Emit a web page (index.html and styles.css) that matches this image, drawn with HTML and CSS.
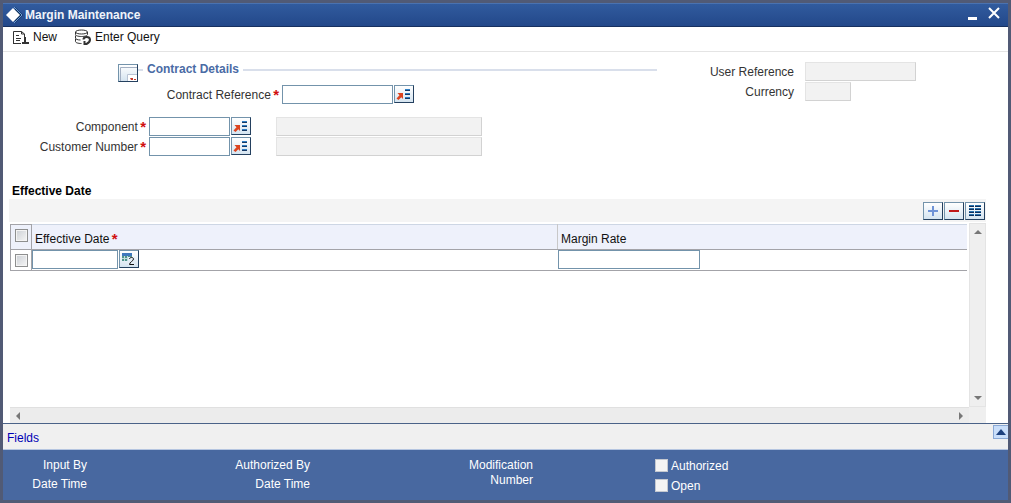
FILE: index.html
```html
<!DOCTYPE html>
<html lang="en">
<head>
    <meta charset="UTF-8">
    <meta name="viewport" content="width=device-width, initial-scale=1.0">
    <title>Margin Maintenance</title>
    <link rel="stylesheet" href="styles.css">
</head>
<body>
    <svg class="sprite" aria-hidden="true">
        <symbol id="lov" viewBox="0 0 18 16">
            <path d="M2.500 7H8v6L6.300 11.300 3.500 14 1.500 12.500 4.500 9.300z" fill="#dc4420"/>
            <path d="M10 4h5M10 8h5M10 12h5" stroke="#2f7fc4" stroke-width="2"/>
            <path d="M10 4.500h5M10 8.500h5M10 12.500h5" stroke="#163a66"/>
        </symbol>
    </svg>

    <div class="window">
        <header class="titlebar">
            <svg class="logo" width="18" height="18" viewBox="0 0 18 18">
                <path d="M10 1l8 8-8 8z" fill="#0c2f5c"/>
                <path d="M8 2l7 7-7 7-7-7z" fill="#fff"/>
                <path d="M9 1l8 8-8 8" fill="none" stroke="#6d9bd0"/>
            </svg>
            <h1>Margin Maintenance</h1>
            <button class="win-btn" type="button" aria-label="Minimize">
                <svg width="12" height="18" viewBox="0 0 12 18"><path d="M2 12.500h9" stroke="#fff" stroke-width="3"/></svg>
            </button>
            <button class="win-btn" type="button" aria-label="Close">
                <svg width="12" height="18" viewBox="0 0 12 18"><path d="M1 2l10 10M11 2L1 12" stroke="#fff" stroke-width="2"/></svg>
            </button>
        </header>

        <nav class="actions">
            <button class="action" type="button">
                <svg width="18" height="16" viewBox="0 0 18 16" fill="none" stroke="#333">
                    <path d="M1.500 15V2.500h8l3 2.500v5M9.500 2.500V5h3M1 14.500h8M4 6.500h3M4 9.500h5M4 11.500h4"/>
                    <path d="M13 8v7M10 14h7" stroke-width="2"/>
                </svg>
                New
            </button>
            <button class="action" type="button">
                <svg width="18" height="16" viewBox="0 0 18 16" fill="none" stroke="#333">
                    <ellipse cx="7.500" cy="3" rx="6" ry="2"/>
                    <path d="M1.500 3v2.500c0 1.200 2.500 2 6 2s6-.8 6-2V3M1.500 6.500v2.500c0 1.200 2 2 5 2M1.500 10v2.500c0 1.200 2.500 2 6 2"/>
                    <path d="M9.500 10.500c0-3 6-3.500 6.500 0 .2 2-1.500 3.500-3.500 4.500M10.500 12v3h3.500" stroke-width="2"/>
                </svg>
                Enter Query
            </button>
        </nav>

        <main class="content">
            <section class="contract">
                <div class="details">
                    <div class="legend">
                        <button class="icon-btn" type="button" aria-label="Toggle details">
                            <svg width="18" height="16" viewBox="0 0 18 16">
                                <path d="M1.500 16V2.500H18" fill="none" stroke="#a3afc2"/>
                                <path d="M9 10h9v6H9z" fill="#fff"/>
                                <path d="M8.500 16V9.500H18" fill="none" stroke="#b8c3d4"/>
                                <path d="M11 13h3v2h-2zM15 14h2v1h-2z" fill="#c43a2c"/>
                            </svg>
                        </button>
                        <h2>Contract Details</h2>
                    </div>
                    <div class="field wide">
                        <label for="contractRef">Contract Reference <span class="req">*</span></label>
                        <input id="contractRef" class="box medium" type="text">
                        <button class="icon-btn" type="button" aria-label="Find contract"><svg width="18" height="16"><use href="#lov"/></svg></button>
                    </div>
                    <div class="group">
                        <div class="field">
                            <label for="component">Component <span class="req">*</span></label>
                            <input id="component" class="box small" type="text">
                            <button class="icon-btn" type="button" aria-label="Find component"><svg width="18" height="16"><use href="#lov"/></svg></button>
                            <input class="box readonly desc" type="text" aria-label="Component description" readonly>
                        </div>
                        <div class="field">
                            <label for="customer">Customer Number <span class="req">*</span></label>
                            <input id="customer" class="box small" type="text">
                            <button class="icon-btn" type="button" aria-label="Find customer"><svg width="18" height="16"><use href="#lov"/></svg></button>
                            <input class="box readonly desc" type="text" aria-label="Customer name" readonly>
                        </div>
                    </div>
                </div>
                <div class="summary">
                    <div class="field">
                        <label for="userRef">User Reference</label>
                        <input id="userRef" class="box readonly medium" type="text" readonly>
                    </div>
                    <div class="field">
                        <label for="currency">Currency</label>
                        <input id="currency" class="box readonly tiny" type="text" readonly>
                    </div>
                </div>
            </section>

            <section class="dates">
                <h3>Effective Date</h3>
                <div class="table-tools">
                    <button class="icon-btn" type="button" aria-label="Add row">
                        <svg width="18" height="16" viewBox="0 0 18 16"><path d="M9 3v10M4 8h10" stroke="#6f93d6" stroke-width="2"/></svg>
                    </button>
                    <button class="icon-btn" type="button" aria-label="Delete row">
                        <svg width="18" height="16" viewBox="0 0 18 16"><path d="M4 8h10" stroke="#c01818" stroke-width="2"/></svg>
                    </button>
                    <button class="icon-btn" type="button" aria-label="Single view">
                        <svg width="18" height="16" viewBox="0 0 18 16">
                            <path d="M3 3h5M3 6h5M3 9h5M3 12h5M9 3h6M9 6h6M9 9h6M9 12h6" stroke="#2a72ad" stroke-width="2"/>
                            <path d="M3 3.500h5M3 6.500h5M3 9.500h5M3 12.500h5M9 3.500h6M9 6.500h6M9 9.500h6M9 12.500h6" stroke="#0c2f5c"/>
                        </svg>
                    </button>
                </div>
                <div class="scroller">
                    <div class="table-area">
                        <table>
                            <thead>
                                <tr>
                                    <th class="tick"><input type="checkbox" aria-label="Select all rows"></th>
                                    <th class="date">Effective Date <span class="req">*</span></th>
                                    <th>Margin Rate</th>
                                </tr>
                            </thead>
                            <tbody>
                                <tr>
                                    <td class="tick"><input type="checkbox" aria-label="Select row"></td>
                                    <td>
                                        <div class="cell">
                                            <input class="box day" type="text" aria-label="Effective Date">
                                            <button class="icon-btn" type="button" aria-label="Pick date">
                                                <svg width="18" height="16" viewBox="0 0 18 16">
                                                    <path d="M2 2h10v3H2z" fill="#3f78bd"/>
                                                    <path d="M2 5h10v5H2z" fill="#4f938c"/>
                                                    <path d="M2 7.500h10M4.500 5v5M7.500 5v5" stroke="#c2dcdc"/>
                                                    <path d="M8 6h7v8H8z" fill="#e3edf6"/>
                                                    <path d="M9.500 8c0-2 4-2 4 0 0 2-4 3-4 5.500H14" fill="none" stroke="#111"/>
                                                </svg>
                                            </button>
                                        </div>
                                    </td>
                                    <td class="rate"><div class="cell"><input class="box amount" type="text" aria-label="Margin Rate"></div></td>
                                </tr>
                            </tbody>
                        </table>
                    </div>
                    <div class="vbar">
                        <svg width="8" height="4" viewBox="0 0 8 4"><path d="M4 0l4 4H0z" fill="#777"/></svg>
                        <svg width="8" height="4" viewBox="0 0 8 4"><path d="M0 0h8L4 4z" fill="#777"/></svg>
                    </div>
                    <div class="hbar">
                        <svg width="4" height="8" viewBox="0 0 4 8"><path d="M4 0v8L0 4z" fill="#777"/></svg>
                        <svg width="4" height="8" viewBox="0 0 4 8"><path d="M0 0l4 4-4 4z" fill="#777"/></svg>
                    </div>
                    <div class="corner"></div>
                </div>
            </section>
        </main>

        <div class="links">
            <a href="#fields">Fields</a>
            <button class="expand" type="button" aria-label="Expand">
                <svg width="10" height="6" viewBox="0 0 10 6"><path d="M5 0l5 6H0z" fill="#1d417e"/></svg>
            </button>
        </div>

        <footer class="audit">
            <div class="audit-col">
                <span>Input By</span>
                <span>Date Time</span>
            </div>
            <div class="audit-col">
                <span>Authorized By</span>
                <span>Date Time</span>
            </div>
            <div class="audit-col">
                <span>Modification Number</span>
            </div>
            <div class="flags">
                <label><input type="checkbox">Authorized</label>
                <label><input type="checkbox">Open</label>
            </div>
        </footer>
    </div>
</body>
</html>
```
FILE: styles.css
```css
* {
    box-sizing: border-box;
}
body {
    margin: 0;
    font-family: "Liberation Sans", Arial, sans-serif;
    font-size: 12px;
    line-height: 15px;
    color: #333;
    background: #fff;
}
h1, h2, h3 {
    margin: 0;
    font-size: 12px;
}
button, input {
    margin: 0;
    padding: 0;
    font: inherit;
}
button {
    cursor: pointer;
}
svg {
    display: block;
    flex: none;
}
.sprite {
    display: none;
}
.window {
    display: flex;
    flex-direction: column;
    min-height: 100vh;
    border: 3px solid #515a75;
}

/* title bar */
.titlebar {
    display: flex;
    align-items: center;
    gap: 2px;
    height: 24px;
    padding: 0 8px 0 2px;
    background: linear-gradient(#315b9e, #23488a);
    border-top: 1px solid #4a72b0;
    border-bottom: 1px solid #17305f;
    color: #fff;
}
.titlebar h1 {
    flex: 1;
    padding-top: 1px;
    color: #f0f4fa;
}
.win-btn {
    margin-left: 8px;
    background: none;
    border: none;
}

.actions {
    display: flex;
    gap: 17px;
    height: 25px;
    padding: 0 9px 4px;
    border-bottom: 1px solid #e4e4e4;
}
.action {
    display: flex;
    align-items: center;
    gap: 3px;
    background: none;
    border: none;
    color: #111;
}

.content {
    flex: 1;
    display: flex;
    flex-direction: column;
}

/* contract fields */
.contract {
    display: flex;
    padding-top: 10px;
}
.details {
    flex: 1;
}
.summary {
    width: 351px;
}
.legend {
    display: flex;
    align-items: flex-start;
    height: 23px;
    padding-left: 115px;
}
.legend .icon-btn {
    margin-top: 2px;
}
.legend h2 {
    flex: 1;
    display: flex;
    align-items: center;
    gap: 4px;
    color: #4a6ba5;
}
.legend h2::before,
.legend h2::after {
    content: "";
    height: 2px;
    background: #d9dfeb;
}
.legend h2::before {
    width: 5px;
}
.legend h2::after {
    flex: 1;
}
.field {
    display: flex;
    gap: 1px;
    height: 20px;
}
.field label {
    width: 145px;
    padding: 3px 2px 0 0;
    text-align: right;
    white-space: nowrap;
}
.field.wide label {
    width: 278px;
}
.summary .field label {
    width: 139px;
    margin-right: 8px;
}
.group {
    padding-top: 12px;
}
.req {
    margin-left: -1px;
    color: #d01010;
    font-size: 15px;
    font-weight: bold;
    line-height: 12px;
    vertical-align: -1px;
}
.box {
    height: 19px;
    border: 1px solid #7393ab;
    background: #fff;
}
.box.readonly {
    background: #f2f2f2;
    border-color: #e4e4e4 #d2d2d2 #d2d2d2 #e4e4e4;
}
.tiny {
    width: 46px;
}
.small {
    width: 81px;
}
.medium {
    width: 111px;
}
.desc {
    width: 206px;
    margin-left: 24px;
}
.day {
    width: 86px;
}
.amount {
    width: 142px;
}
.icon-btn {
    flex: none;
    width: 20px;
    height: 18px;
    background: linear-gradient(#fff, #d5e4f0);
    border: 1px solid #7393ab;
    border-right-color: #24405f;
    border-bottom-color: #24405f;
}

/* effective date table */
.dates {
    flex: 1;
    display: flex;
    flex-direction: column;
    padding: 27px 22px 0 6px;
}
.dates h3 {
    padding-left: 3px;
    color: #000;
}
.table-tools {
    display: flex;
    justify-content: flex-end;
    align-items: center;
    gap: 1px;
    height: 23px;
    padding-right: 1px;
    background: #f4f4f4;
}
.scroller {
    flex: 1;
    display: grid;
    grid-template-columns: 1fr 17px;
    grid-template-rows: 1fr 16px;
    margin-left: 1px;
}
.table-area {
    padding: 2px 2px 0 0;
}
table {
    width: 100%;
    border-collapse: collapse;
    table-layout: fixed;
}
th, td {
    padding: 0;
    border-bottom: 1px solid #a3a3a8;
}
th {
    height: 25px;
    padding: 4px 0 0 3px;
    background: #eef1fb;
    border-top: 1px solid #cdd6e4;
    border-right: 1px solid #c8c8c8;
    color: #111;
    font-weight: normal;
    text-align: left;
}
th:last-child {
    border-right: none;
}
.date {
    width: 526px;
}
.tick {
    width: 21px;
    padding: 0;
    border: 1px solid #a3a3a8;
}
th.tick {
    padding-bottom: 3px;
}
.tick input {
    display: block;
    margin: 0 auto;
}
.cell {
    display: flex;
    gap: 1px;
    height: 20px;
}
input[type="checkbox"] {
    appearance: none;
    width: 13px;
    height: 13px;
    border: 1px solid #8e8f8f;
    outline: 1px solid #f4f4f4;
    outline-offset: -2px;
    background: linear-gradient(135deg, #cbcfd5, #f6f6f6);
}
.vbar,
.hbar {
    display: flex;
    justify-content: space-between;
    align-items: center;
    background: #efefef;
}
.vbar {
    flex-direction: column;
    margin-top: 1px;
    padding: 6px 0;
    border: 1px solid #e4e4e4;
}
.hbar {
    padding: 0 6px;
    background: #ececec;
    border-top: 1px solid #e0e0e0;
}
.corner {
    background: #efefef;
}

/* bottom bars */
.links {
    display: flex;
    justify-content: space-between;
    height: 27px;
    padding-left: 4px;
    background: #f0f0f0;
    border-top: 1px solid #4a6288;
    border-bottom: 1px solid #b5c5e0;
}
.links a {
    padding-top: 7px;
    color: #0000b4;
    text-decoration: none;
}
.expand {
    display: flex;
    align-items: center;
    justify-content: center;
    width: 15px;
    height: 14px;
    margin-top: 1px;
    background: #c9defa;
    border: 1px solid #8aa9d6;
    border-right: none;
}
.audit {
    display: grid;
    grid-template-columns: 223px 223px 206px 1fr;
    height: 50px;
    background: #4868a0;
    color: #fff;
}
.audit-col {
    display: flex;
    flex-direction: column;
    gap: 4px;
    width: 84px;
    padding-top: 8px;
    text-align: right;
}
.audit-col span {
    display: flex;
    justify-content: flex-end;
    white-space: nowrap;
}
.audit-col:nth-child(3) span {
    display: block;
    white-space: normal;
}
.flags {
    display: flex;
    flex-direction: column;
    gap: 5px;
    padding-top: 9px;
}
.flags label {
    display: flex;
    gap: 3px;
    padding-top: 0;
}
.flags input[type="checkbox"] {
    border-color: #c4c8d0;
    background: #f4f4f4;
}
```
